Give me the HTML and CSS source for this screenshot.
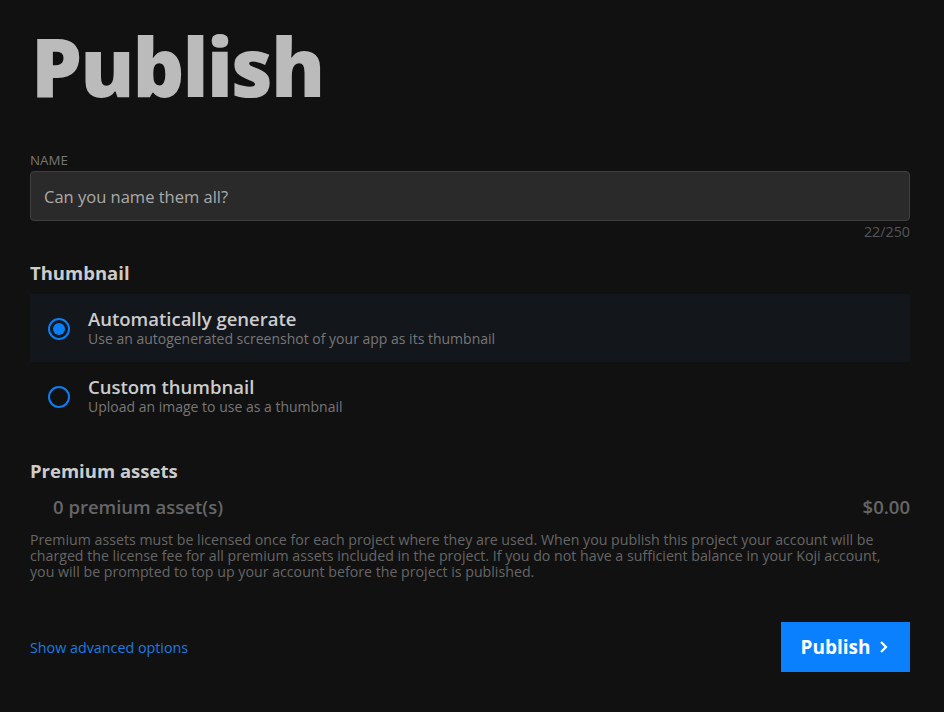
FILE: index.html
```html
<!DOCTYPE html>
<html>
<head>
<meta charset="utf-8">
<link rel="stylesheet" href="styles.css">
</head>
<body>
<main class="page">
  <h1 class="title">Publish</h1>

  <div class="field">
    <label class="label">NAME</label>
    <div class="input">Can you name them all?</div>
    <div class="counter">22/250</div>
  </div>

  <h2 class="section">Thumbnail</h2>
  <div class="options">
    <div class="option selected">
      <span class="radio checked"></span>
      <div class="opt-text">
        <div class="opt-title">Automatically generate</div>
        <div class="opt-sub">Use an autogenerated screenshot of your app as its thumbnail</div>
      </div>
    </div>
    <div class="option">
      <span class="radio"></span>
      <div class="opt-text">
        <div class="opt-title">Custom thumbnail</div>
        <div class="opt-sub">Upload an image to use as a thumbnail</div>
      </div>
    </div>
  </div>

  <h2 class="section premium-h">Premium assets</h2>
  <div class="asset-row">
    <span>0 premium asset(s)</span>
    <span>$0.00</span>
  </div>
  <p class="note">Premium assets must be licensed once for each project where they are used. When you publish this project your account will be charged the license fee for all premium assets included in the project. If you do not have a sufficient balance in your Koji account, you will be prompted to top up your account before the project is published.</p>

  <div class="footer">
    <a class="adv">Show advanced options</a>
    <button class="publish">Publish
      <svg width="12" height="14" viewBox="0 0 12 14"><path d="M3 2 L8 7 L3 12" fill="none" stroke="#fff" stroke-width="2.2"/></svg>
    </button>
  </div>
</main>
</body>
</html>
```

FILE: styles.css
```css
html, body {
  margin: 0;
  padding: 0;
  background: #111111;
}
body {
  font-family: "Open Sans", "Noto Sans", sans-serif;
  color: #cccccc;
}
.page {
  padding: 16px 34px 0 30px;
}
.title {
  margin: 0 0 0 1px;
  font-family: "Open Sans", sans-serif;
  font-weight: 800;
  font-size: 81px;
  line-height: 99px;
  color: #bbbbbb;
  letter-spacing: -2px;
}
.field {
  margin-top: 37px;
}
.label {
  display: block;
  font-size: 13.3px;
  line-height: 16px;
  color: #777777;
}
.input {
  margin-top: 3px;
  height: 48px;
  box-sizing: content-box;
  border: 1px solid #3f3f3f;
  border-radius: 4px;
  background: #2a2a2a;
  padding: 0 13px;
  display: flex;
  align-items: center;
  font-size: 16.5px;
  color: #aaaaaa;
}
.counter {
  text-align: right;
  font-size: 14.3px;
  line-height: 22px;
  color: #555555;
}
.section {
  margin: 18px 0 0;
  font-size: 18.5px;
  font-weight: 700;
  line-height: 24px;
  color: #cccccc;
}
.options {
  margin-top: 9px;
}
.option {
  height: 68px;
  display: flex;
  align-items: center;
  padding-left: 18px;
}
.option.selected {
  background: #13161b;
}
.radio {
  width: 18px;
  height: 18px;
  border: 2px solid #0a7ef5;
  border-radius: 50%;
  flex: none;
  position: relative;
  margin-right: 18px;
  margin-top: 2px;
}
.radio.checked::after {
  content: "";
  position: absolute;
  left: 3px;
  top: 3px;
  width: 12px;
  height: 12px;
  border-radius: 50%;
  background: #0a7ef5;
}
.opt-title {
  font-size: 18.5px;
  font-weight: 600;
  line-height: 22px;
  color: #cccccc;
}
.opt-sub {
  font-size: 14px;
  line-height: 18px;
  color: #777777;
}
.premium-h {
  margin-top: 29px;
}
.asset-row {
  display: flex;
  justify-content: space-between;
  padding-left: 23px;
  margin-top: 12px;
  font-size: 18.5px;
  font-weight: 600;
  line-height: 24px;
  color: #666666;
}
.note {
  margin: 13px 20px 0 0;
  font-size: 14.2px;
  line-height: 16px;
  color: #666666;
}
.footer {
  margin-top: 42px;
  display: flex;
  justify-content: space-between;
  align-items: center;
}
.adv {
  font-size: 14.3px;
  color: #1a7be0;
}
.publish {
  width: 129px;
  height: 50px;
  border: none;
  border-radius: 0;
  background: #0a80ff;
  color: #ffffff;
  font-family: "Open Sans", sans-serif;
  font-weight: 700;
  font-size: 19px;
  display: flex;
  align-items: center;
  justify-content: center;
  gap: 8px;
  padding: 0;
}
```
